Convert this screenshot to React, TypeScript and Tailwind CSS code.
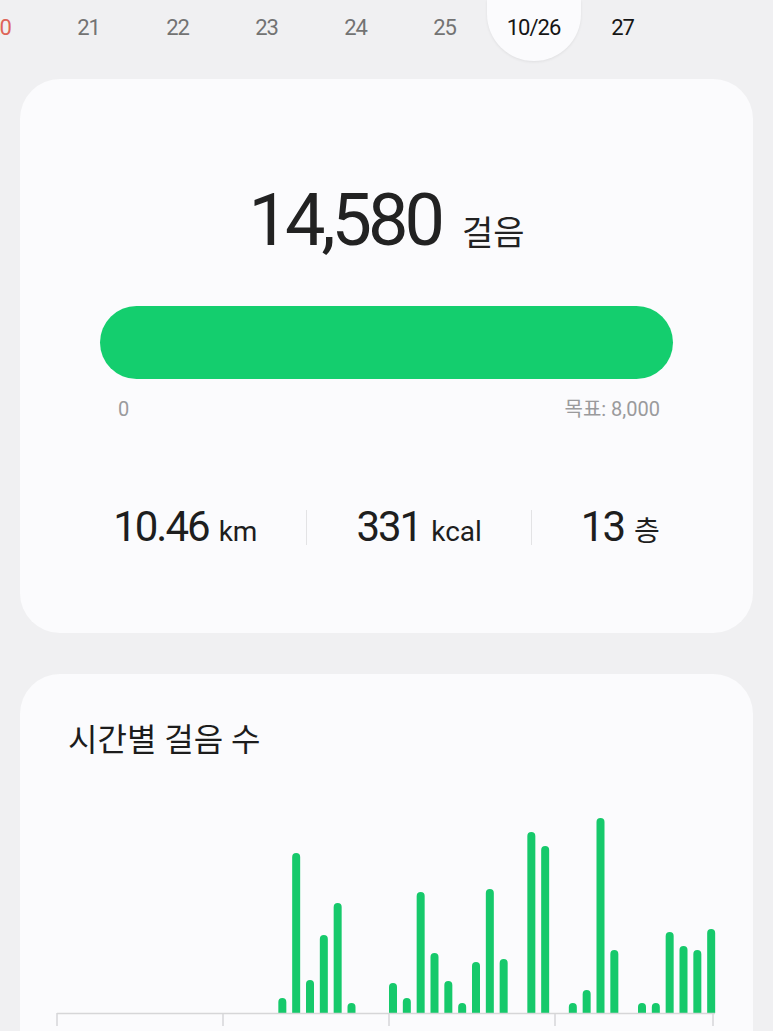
const dates = [
  { label: "20", tone: "text-[#de6458]" },
  { label: "21", tone: "text-[#737373]" },
  { label: "22", tone: "text-[#737373]" },
  { label: "23", tone: "text-[#737373]" },
  { label: "24", tone: "text-[#737373]" },
  { label: "25", tone: "text-[#737373]" },
  { label: "10/26", tone: "text-[#161616]", selected: true },
  { label: "27", tone: "text-[#161616]" },
];

// half-hour buckets, 48 of them
const steps: Record<number, number> = {
  16: 15, 17: 160, 18: 33, 19: 78, 20: 110, 21: 10,
  24: 30, 25: 15, 26: 121, 27: 60, 28: 32, 29: 10, 30: 51, 31: 124, 32: 54,
  34: 181, 35: 167, 37: 10, 38: 23, 39: 195, 40: 63,
  42: 10, 43: 10, 44: 81, 45: 67, 46: 63, 47: 84,
};

function DateStrip() {
  return (
    <div className="flex ml-[-45px] h-[61px]">
      {dates.map((d) =>
        d.selected ? (
          <div
            key={d.label}
            className="w-[94px] -mx-[2.5px] h-[61px] shrink-0 flex justify-center pt-[15px] bg-[#fbfbfd] rounded-b-[47px] shadow-[0_1px_3px_rgba(0,0,0,0.07)]"
          >
            <span className={`text-[22px] leading-[26px] tracking-[-1px] ${d.tone}`}>{d.label}</span>
          </div>
        ) : (
          <div key={d.label} className="w-[89px] h-[61px] shrink-0 flex justify-center pt-[15px]">
            <span className={`text-[22px] leading-[26px] tracking-[-1px] ${d.tone}`}>{d.label}</span>
          </div>
        )
      )}
    </div>
  );
}

function Stat({ value, unit }: { value: string; unit: string }) {
  return (
    <div className="flex items-baseline gap-[10px] text-[#1e1e1e]">
      <span className="text-[42px] leading-none tracking-[-2px]">{value}</span>
      <span className="text-[28px] leading-none">{unit}</span>
    </div>
  );
}

function HourlyChart() {
  const slot = 664 / 48;
  return (
    <svg width="690" height="230" viewBox="0 0 690 230" className="block">
      {Object.entries(steps).map(([i, h]) => {
        const cx = 7 + 4 + Number(i) * slot;
        const b = 210;
        const t = b - h;
        return (
          <path
            key={i}
            d={`M${cx - 4} ${b} V${t + 4} A4 4 0 0 1 ${cx + 4} ${t + 4} V${b} Z`}
            fill="#16c96b"
          />
        );
      })}
      <line x1="7" y1="210.5" x2="665" y2="210.5" stroke="#d6d6d8" strokeWidth="1.5" />
      {[7, 173, 339, 505, 663].map((x) => (
        <line key={x} x1={x} y1="210" x2={x} y2="223" stroke="#d6d6d8" strokeWidth="1.5" />
      ))}
    </svg>
  );
}

export default function App() {
  return (
    <div className="w-[773px] min-h-[1031px] overflow-hidden bg-[#f0f0f2] font-[Roboto,'Noto_Sans_CJK_KR',sans-serif]">
      <DateStrip />

      <div className="mx-[20px] mt-[18px] rounded-[40px] bg-[#fbfbfd] pt-[106px] pb-[85px]">
        <div className="flex items-baseline justify-center gap-[21px] text-[#222]">
          <span className="text-[72px] leading-none tracking-[-4px]">14,580</span>
          <span className="text-[34px] leading-none">걸음</span>
        </div>

        <div className="mx-[80px] mt-[49px] h-[73px] rounded-full bg-[#14ce6e]" />

        <div className="mx-[80px] mt-[20px] flex justify-between pl-[18px] pr-[13px] text-[20px] leading-none text-[#9a9a9c]">
          <span>0</span>
          <span>목표: 8,000</span>
        </div>

        <div className="mt-[87px] flex items-center justify-center gap-[49px]">
          <Stat value="10.46" unit="km" />
          <div className="w-px h-[35px] bg-[#e3e3e5]" />
          <Stat value="331" unit="kcal" />
          <div className="w-px h-[35px] bg-[#e3e3e5]" />
          <Stat value="13" unit="층" />
        </div>
      </div>

      <div className="mx-[20px] mt-[41px] rounded-[40px] bg-[#fbfbfd] pt-[50px] pb-[60px]">
        <h2 className="pl-[48px] text-[32px] leading-none text-[#1c1c1c]">시간별 걸음 수</h2>
        <div className="mt-[47px] pl-[30px]">
          <HourlyChart />
        </div>
      </div>
    </div>
  );
}
